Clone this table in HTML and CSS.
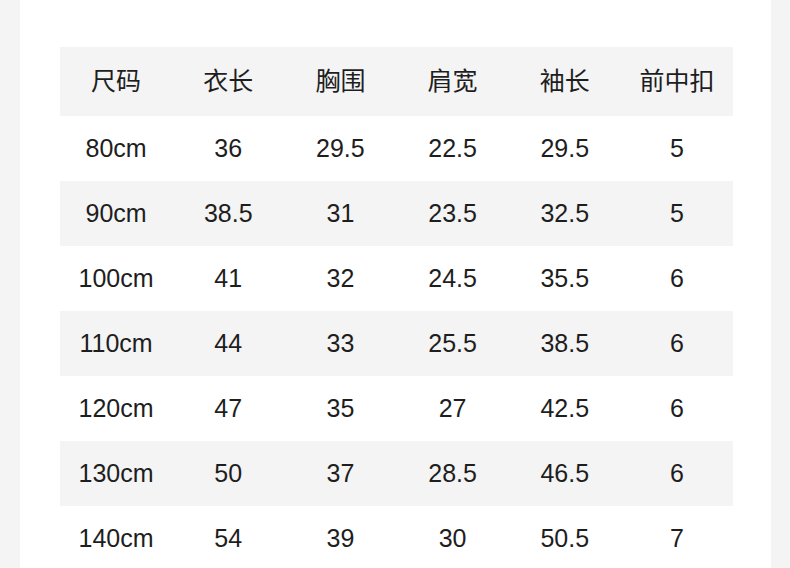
FILE: index.html
```html
<!DOCTYPE html>
<html lang="zh">
<head>
<meta charset="utf-8">
<link rel="stylesheet" href="styles.css">
</head>
<body>
<div class="page">
  <div class="panel">
    <div class="table">
      <div class="row head"><span>尺码</span><span>衣长</span><span>胸围</span><span>肩宽</span><span>袖长</span><span>前中扣</span></div>
      <div class="row"><span>80cm</span><span>36</span><span>29.5</span><span>22.5</span><span>29.5</span><span>5</span></div>
      <div class="row alt"><span>90cm</span><span>38.5</span><span>31</span><span>23.5</span><span>32.5</span><span>5</span></div>
      <div class="row"><span>100cm</span><span>41</span><span>32</span><span>24.5</span><span>35.5</span><span>6</span></div>
      <div class="row alt"><span>110cm</span><span>44</span><span>33</span><span>25.5</span><span>38.5</span><span>6</span></div>
      <div class="row"><span>120cm</span><span>47</span><span>35</span><span>27</span><span>42.5</span><span>6</span></div>
      <div class="row alt"><span>130cm</span><span>50</span><span>37</span><span>28.5</span><span>46.5</span><span>6</span></div>
      <div class="row"><span>140cm</span><span>54</span><span>39</span><span>30</span><span>50.5</span><span>7</span></div>
    </div>
  </div>
</div>
</body>
</html>
```

FILE: styles.css
```css
html, body {
  margin: 0;
  padding: 0;
  background: #f4f4f4;
  overflow: hidden;
}
.page {
  width: 790px;
  height: 568px;
  overflow: hidden;
}
.panel {
  margin-left: 20px;
  width: 751px;
  height: 568px;
  background: #ffffff;
  padding-top: 47px;
  padding-left: 40px;
  box-sizing: border-box;
}
.table {
  width: 673px;
  font-family: "Liberation Sans", "Noto Sans CJK SC", sans-serif;
  font-size: 25px;
  color: #1e1e1e;
}
.row {
  display: grid;
  grid-template-columns: repeat(6, 1fr);
  height: 65px;
  align-items: center;
  text-align: center;
}
.row.head {
  height: 69px;
  box-sizing: border-box;
  padding-bottom: 5px;
  background: #f4f4f4;
  font-family: "Noto Sans CJK SC", sans-serif;
  font-weight: 400;
  font-size: 25px;
}
.row.alt {
  background: #f4f4f4;
}
```
